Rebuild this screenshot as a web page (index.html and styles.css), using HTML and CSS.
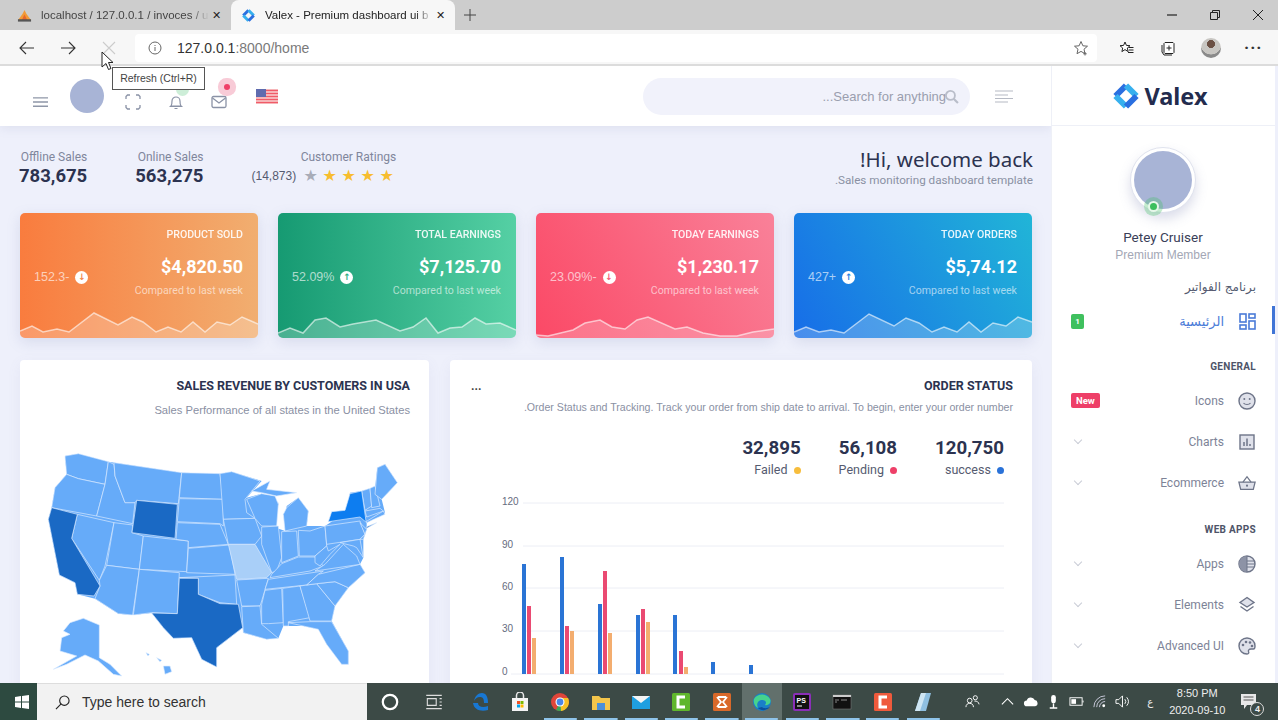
FILE: index.html
```html
<!DOCTYPE html>
<html lang="en">
<head>
  <meta charset="UTF-8" />
  <title>Valex - Premium dashboard ui bootstrap</title>
  <link rel="stylesheet" href="styles.css">
</head>
<body>

  <!-- browser tabs -->
  <div class="tabbar">
    <div class="tab">
      <svg class="tab-icon" viewBox="0 0 16 16"><path d="M1 13 6 6l2-4 2 4 5 7z" fill="#f29b37"/><path d="M5 13l3-6 3 6z" fill="#e8662a"/><rect x="1" y="12" width="14" height="2.5" fill="#555"/></svg>
      <span class="tab-title">localhost / 127.0.0.1 / invoces / u</span>
      <span class="tab-close">✕</span>
    </div>
    <div class="tab tab-active">
      <svg class="tab-icon" viewBox="0 0 30 30"><use href="#valex-mark"/></svg>
      <span class="tab-title">Valex - Premium dashboard ui b</span>
      <span class="tab-close">✕</span>
    </div>
    <svg class="tab-new" viewBox="0 0 12 12"><path d="M6 0v12M0 6h12" stroke="#444" fill="none"/></svg>
    <div class="win-controls">
      <svg viewBox="0 0 12 12"><path d="M1 6h10" stroke="#222" stroke-width="1.2"/></svg>
      <svg viewBox="0 0 12 12"><path d="M1.5 3.5h7v7h-7zM3.5 3.5v-2h7v7h-2" stroke="#222" fill="none"/></svg>
      <svg viewBox="0 0 12 12"><path d="M1 1l10 10M11 1 1 11" stroke="#222" fill="none"/></svg>
    </div>
  </div>

  <!-- browser toolbar -->
  <div class="toolbar">
    <svg class="nav-btn" viewBox="0 0 16 16"><path d="M15 8H1M7 2 1 8l6 6" stroke="#333" fill="none" stroke-width="1.1"/></svg>
    <svg class="nav-btn" viewBox="0 0 16 16"><path d="M1 8h14M9 2l6 6-6 6" stroke="#333" fill="none" stroke-width="1.1"/></svg>
    <svg class="nav-btn" viewBox="0 0 16 16"><path d="M2 2l12 12M14 2 2 14" stroke="#ccc" fill="none" stroke-width="1.1"/></svg>
    <div class="address">
      <svg class="info-icon" viewBox="0 0 14 14"><circle cx="7" cy="7" r="6" fill="none" stroke="#666"/><path d="M7 6v4M7 4v1" stroke="#666"/></svg>
      <span class="url">127.0.0.1<span class="url-muted">:8000/home</span></span>
      <svg class="star-icon" viewBox="0 0 16 16"><path d="M8 1.5l1.9 4.3 4.6.4-3.5 3 1 4.5L8 11.4l-4 2.3 1-4.5-3.5-3 4.6-.4z" fill="none" stroke="#666"/><path d="M12 12v3.5M10.3 13.8h3.4" stroke="#666"/></svg>
    </div>
    <div class="tool-icons">
      <svg viewBox="0 0 16 16"><path d="M6 2l1.4 3.4 3.6.3-2.7 2.3.9 3.6L6 9.6 2.900 11.600l.8-3.600L1 5.700l3.600-.3z" fill="#fff" stroke="#222"/><path d="M9.500 7.500h5M10 10h4.500M9 12.500h5.500" stroke="#222"/></svg>
      <svg viewBox="0 0 16 16"><path d="M5 2.500h8l1 1v9l-1 1H5l-1-1v-9z" fill="#fff" stroke="#222"/><path d="M2 5v7l2 3h8" fill="none" stroke="#222"/><path d="M9 5.500v5M6.500 8h5" stroke="#222"/></svg>
      <div class="profile-pic"></div>
      <span class="dots">···</span>
    </div>
  </div>

  <div class="page">
    <div class="main">

      <div class="header">
        <div class="header-left">
          <svg class="burger" viewBox="0 0 16 12"><path d="M0 1.500h16M0 6h16M0 10.500h16" stroke="#8f97a8" stroke-width="1.400"/></svg>
          <div class="head-avatar"></div>
          <svg class="head-icon" viewBox="0 0 16 16"><path d="M1 5V2.500L2.500 1H5M11 1h2.500L15 2.500V5M15 11v2.500L13.500 15H11M5 15H2.500L1 13.500V11" fill="none" stroke="#8a92a6" stroke-width="1.300"/></svg>
          <div class="head-bell">
            <span class="pulse pulse-green"></span>
            <svg class="head-icon" viewBox="0 0 16 16"><path d="M3 12c1-1 1-2 1-5a4 4 0 0 1 8 0c0 3 0 4 1 5zM1.500 12.500h13M6.500 14.500h3" fill="none" stroke="#8a92a6" stroke-width="1.200"/></svg>
          </div>
          <div class="head-mail">
            <span class="pulse pulse-red"></span>
            <svg class="head-icon" viewBox="0 0 16 14"><rect x="1" y="1.500" width="14" height="11" rx="1.500" fill="none" stroke="#8a92a6" stroke-width="1.300"/><path d="M1.500 3l6.500 5 6.500-5" fill="none" stroke="#8a92a6" stroke-width="1.300"/></svg>
          </div>
          <svg class="flag" viewBox="0 0 22 15">
            <rect width="22" height="15" fill="#f6b5b8"/>
            <path d="M0 1.500h22M0 4.500h22M0 7.500h22M0 10.500h22M0 13.500h22" stroke="#f05b68" stroke-width="1.100"/>
            <rect width="10" height="8" fill="#5f6bae"/>
          </svg>
        </div>
        <div class="header-right">
          <div class="search">
            <span class="search-text">...Search for anything</span>
            <svg class="search-icon" viewBox="0 0 14 14"><circle cx="6" cy="6" r="4.200" fill="none" stroke="#b9bdc9" stroke-width="1.700"/><path d="M9 9l4 4" stroke="#b9bdc9" stroke-width="2"/></svg>
          </div>
          <svg class="align-icon" viewBox="0 0 18 13"><path d="M0 1h18M0 5h13M0 8.500h18M0 12h13" stroke="#b6bac4" stroke-width="1.100"/></svg>
        </div>
      </div>

      <div class="content">
        <div class="stats-row">
          <div class="stats-left">
            <div class="stat">
              <div class="stat-label">Offline Sales</div>
              <div class="stat-value">783,675</div>
            </div>
            <div class="stat">
              <div class="stat-label">Online Sales</div>
              <div class="stat-value">563,275</div>
            </div>
            <div class="stat stat-rating">
              <div class="stat-label">Customer Ratings</div>
              <div class="rating-line">
                <span class="rating-count">(14,873)</span>
                <span class="star star-off">★</span><span class="star">★</span><span class="star">★</span><span class="star">★</span><span class="star">★</span>
              </div>
            </div>
          </div>
          <div class="greeting">
            <h2>!Hi, welcome back</h2>
            <p>.Sales monitoring dashboard template</p>
          </div>
        </div>

        <div class="cards">
          <div class="card card-orange">
            <svg class="spark" viewBox="0 0 238 125" preserveAspectRatio="none"><polygon class="spark-fill" points="0,118 12,113 23,119 37,116 49,119 74,100 98,112 112,104 123,109 136,119 148,114 161,119 173,109 185,119 197,109 210,112 222,104 238,111 238,125 0,125"/><polyline class="spark-line" points="0,118 12,113 23,119 37,116 49,119 74,100 98,112 112,104 123,109 136,119 148,114 161,119 173,109 185,119 197,109 210,112 222,104 238,111"/></svg>
            <div class="card-title">PRODUCT SOLD</div>
            <div class="card-mid">
              <span class="card-change">152.3- <span class="arrow">↓</span></span>
              <div class="card-right">
                <div class="card-amount">$4,820.50</div>
                <div class="card-note">Compared to last week</div>
              </div>
            </div>
          </div>
          <div class="card card-green">
            <svg class="spark" viewBox="0 0 238 125" preserveAspectRatio="none"><polygon class="spark-fill" points="0,120 12,115 25,120 37,107 48,105 62,114 75,111 98,107 122,118 135,114 148,105 160,120 172,115 184,114 197,105 208,111 222,110 238,117 238,125 0,125"/><polyline class="spark-line" points="0,120 12,115 25,120 37,107 48,105 62,114 75,111 98,107 122,118 135,114 148,105 160,120 172,115 184,114 197,105 208,111 222,110 238,117"/></svg>
            <div class="card-title">TOTAL EARNINGS</div>
            <div class="card-mid">
              <span class="card-change">52.09% <span class="arrow">↑</span></span>
              <div class="card-right">
                <div class="card-amount">$7,125.70</div>
                <div class="card-note">Compared to last week</div>
              </div>
            </div>
          </div>
          <div class="card card-red">
            <svg class="spark" viewBox="0 0 238 125" preserveAspectRatio="none"><polygon class="spark-fill" points="0,122 12,123 37,117 49,110 64,107 76,114 89,116 101,107 112,104 139,116 151,114 167,120 184,123 201,123 217,119 238,116 238,125 0,125"/><polyline class="spark-line" points="0,122 12,123 37,117 49,110 64,107 76,114 89,116 101,107 112,104 139,116 151,114 167,120 184,123 201,123 217,119 238,116"/></svg>
            <div class="card-title">TODAY EARNINGS</div>
            <div class="card-mid">
              <span class="card-change">23.09%- <span class="arrow">↓</span></span>
              <div class="card-right">
                <div class="card-amount">$1,230.17</div>
                <div class="card-note">Compared to last week</div>
              </div>
            </div>
          </div>
          <div class="card card-blue">
            <svg class="spark" viewBox="0 0 238 125" preserveAspectRatio="none"><polygon class="spark-fill" points="0,119 12,114 25,119 37,117 50,120 75,101 100,113 112,105 125,110 138,119 150,114 163,119 175,109 187,119 199,110 212,113 224,104 238,109 238,125 0,125"/><polyline class="spark-line" points="0,119 12,114 25,119 37,117 50,120 75,101 100,113 112,105 125,110 138,119 150,114 163,119 175,109 187,119 199,110 212,113 224,104 238,109"/></svg>
            <div class="card-title">TODAY ORDERS</div>
            <div class="card-mid">
              <span class="card-change">427+ <span class="arrow">↑</span></span>
              <div class="card-right">
                <div class="card-amount">$5,74.12</div>
                <div class="card-note">Compared to last week</div>
              </div>
            </div>
          </div>
        </div>

        <div class="panels">
          <div class="panel panel-map">
            <div class="panel-title">SALES REVENUE BY CUSTOMERS IN USA</div>
            <div class="panel-sub">Sales Performance of all states in the United States</div>
            <svg class="us-map" viewBox="0 0 1200 750">
              <polygon class="country" points="135,75 175,68 265,92 485,125 600,128 635,122 725,150 680,200 725,188 775,215 768,290 795,300 800,225 835,200 865,240 860,285 915,285 930,275 980,240 990,185 1025,180 1065,170 1072,110 1095,100 1132,155 1085,205 1095,245 1040,275 1040,295 1030,325 1030,380 1020,400 1035,425 985,470 945,525 935,570 985,660 985,700 965,700 920,640 895,595 850,585 790,585 775,622 740,625 670,605 668,590 590,650 590,708 545,685 515,620 460,622 430,590 395,546 338,552 295,548 225,503 172,490 165,455 118,432 85,265 95,230 105,170 140,130"/>
              <g class="state">
                <polygon points="135,75 175,68 265,92 255,160 175,143 140,130"/>
                <polygon points="140,130 175,143 255,160 230,255 95,230 105,170"/>
                <polygon points="172,250 282,275 255,405 238,448 155,322"/>
                <polygon points="265,92 282,100 285,135 315,215 345,215 338,278 230,255 255,160"/>
                <polygon points="282,95 485,125 475,218 350,208 345,215 315,215 285,135"/>
                <polygon points="282,275 338,282 336,305 370,315 358,415 260,403"/>
                <polygon points="370,315 505,330 500,422 358,415"/>
                <polygon points="260,403 358,415 338,552 295,548 225,503 240,465 238,448"/>
                <polygon points="358,415 478,425 472,548 395,545 340,552"/>
                <polygon points="485,125 600,128 610,205 478,200"/>
                <polygon points="478,203 610,205 610,285 600,278 472,272"/>
                <polygon points="472,275 600,280 625,340 505,350 505,330 468,325"/>
                <polygon points="505,352 628,342 645,430 500,425"/>
                <polygon points="478,440 645,432 650,520 600,515 535,490 535,442"/>
                <polygon points="600,128 635,122 720,150 675,205 680,245 705,262 610,265"/>
                <polygon points="610,265 705,262 725,315 705,340 625,340"/>
                <polygon points="650,447 745,442 725,510 720,525 665,525"/>
                <polygon points="665,527 720,525 725,580 775,622 740,625 670,605"/>
                <polygon points="680,205 725,188 765,195 775,220 770,285 725,285 705,262"/>
                <polygon points="725,288 775,285 785,380 770,420 755,425 725,340"/>
                <polygon points="800,230 835,200 865,240 860,285 795,300 790,250"/>
                <polygon points="695,180 750,150 740,175 830,185 770,195 725,185"/>
                <polygon points="785,302 830,300 835,375 785,395"/>
                <polygon points="835,298 870,300 915,285 920,345 885,375 838,375"/>
                <polygon points="755,430 785,398 835,378 885,378 910,405 870,420 750,440"/>
                <polygon points="745,445 910,420 895,430 860,462 735,475"/>
                <polygon points="735,478 785,472 790,575 745,578 725,578 725,520"/>
                <polygon points="788,472 840,465 870,560 805,572 805,585 790,585"/>
                <polygon points="840,465 890,458 945,525 935,570 870,570"/>
                <polygon points="805,575 870,572 935,572 985,660 985,700 965,700 920,640 895,595 850,585"/>
                <polygon points="890,458 945,452 985,470 945,525"/>
                <polygon points="860,462 895,430 1020,400 1035,425 985,470 945,452 890,458"/>
                <polygon points="885,420 915,400 970,340 1010,375 1020,400"/>
                <polygon points="885,375 920,345 925,360 960,340 930,370 900,405 885,395"/>
                <polygon points="915,285 1020,270 1035,310 1020,325 920,340"/>
                <polygon points="960,335 1020,325 1030,380 1010,350 1000,345"/>
                <polygon points="1020,275 1040,295 1030,325 1020,325 1035,310"/>
                <polygon points="1038,272 1090,240 1095,250 1055,268 1040,275"/>
                <polygon points="1035,240 1080,232 1090,240 1040,258"/>
                <polygon points="1025,180 1050,172 1055,225 1035,238"/>
                <polygon points="1050,172 1065,165 1080,225 1055,230"/>
                <polygon points="1072,110 1095,100 1132,155 1085,205 1065,190"/>
                <polygon points="150,575 190,562 238,582 238,680 270,700 305,735 280,730 235,690 195,672 140,700 100,715 170,675 120,660 125,620 150,610 130,600"/>
                <polygon points="430,705 450,705 455,722 435,730"/>
                <polygon points="378,665 388,670 384,675"/>
                <polygon points="410,680 425,688 420,692"/>
              </g>
              <polygon class="state-dark" points="95,230 172,250 155,322 240,465 222,495 172,490 165,455 118,432 85,265"/>
              <polygon class="state-dark" points="350,208 472,220 465,322 336,305"/>
              <polygon class="state-dark" points="478,442 535,442 535,490 600,518 655,520 668,590 590,650 590,708 545,685 515,620 460,622 430,590 395,546 472,548"/>
              <polygon class="state-light" points="625,340 705,340 755,425 740,440 650,445"/>
              <polygon class="state-bright" points="925,272 935,242 975,238 990,188 1025,180 1038,270 1040,275 1020,258"/>
              <polygon class="state-dark" points="1038,288 1070,275 1040,292"/>
            </svg>
          </div>

          <div class="panel panel-chart">
            <div class="panel-head">
              <span class="panel-more">...</span>
              <span class="panel-title">ORDER STATUS</span>
            </div>
            <div class="panel-sub panel-sub-small">.Order Status and Tracking. Track your order from ship date to arrival. To begin, enter your order number</div>
            <div class="order-totals">
              <div class="order-total">
                <strong>32,895</strong>
                <span>Failed <i class="dot dot-orange"></i></span>
              </div>
              <div class="order-total">
                <strong>56,108</strong>
                <span>Pending <i class="dot dot-red"></i></span>
              </div>
              <div class="order-total">
                <strong>120,750</strong>
                <span>success <i class="dot dot-blue"></i></span>
              </div>
            </div>
            <svg class="bar-chart" viewBox="495 490 520 190">
              <g class="grid">
                <line x1="523" x2="1004" y1="504" y2="504"/>
                <line x1="523" x2="1004" y1="547" y2="547"/>
                <line x1="523" x2="1004" y1="589" y2="589"/>
                <line x1="523" x2="1004" y1="632" y2="632"/>
                <line x1="511" x2="1004" y1="675" y2="675"/>
              </g>
              <g class="axis">
                <text x="502" y="506">120</text>
                <text x="502" y="549">90</text>
                <text x="502" y="591">60</text>
                <text x="502" y="633">30</text>
                <text x="502" y="676">0</text>
              </g>
              <g class="bars-blue">
                <rect x="522" y="565" width="4" height="110"/>
                <rect x="560" y="558" width="4" height="117"/>
                <rect x="598" y="605" width="4" height="70"/>
                <rect x="636" y="616" width="4" height="59"/>
                <rect x="673" y="616" width="4" height="59"/>
                <rect x="711" y="663" width="4" height="12"/>
                <rect x="749" y="666" width="4" height="9"/>
              </g>
              <g class="bars-red">
                <rect x="527" y="607" width="4" height="68"/>
                <rect x="565" y="627" width="4" height="48"/>
                <rect x="603" y="572" width="4" height="103"/>
                <rect x="641" y="610" width="4" height="65"/>
                <rect x="679" y="652" width="4" height="23"/>
              </g>
              <g class="bars-orange">
                <rect x="532" y="639" width="4" height="36"/>
                <rect x="570" y="632" width="4" height="43"/>
                <rect x="608" y="634" width="4" height="41"/>
                <rect x="646" y="623" width="4" height="52"/>
                <rect x="684" y="668" width="4" height="7"/>
              </g>
            </svg>
          </div>
        </div>
      </div>
    </div>

    <aside class="sidebar">
      <div class="logo">
        <svg class="logo-mark" viewBox="0 0 30 30">
          <defs>
            <g id="valex-mark" fill="none" stroke-width="6">
              <path d="M4.500 15 15 4.500" stroke="#2a6fe0"/>
              <path d="M15 4.500 25.500 15" stroke="#37b0ee"/>
              <path d="M4.500 15 15 25.500" stroke="#37b0ee"/>
              <path d="M25.500 15 15 25.500" stroke="#2a6fe0"/>
            </g>
          </defs>
          <use href="#valex-mark"/>
        </svg>
        <span class="logo-text">Valex</span>
      </div>

      <div class="user">
        <div class="user-ring">
          <div class="user-photo"></div>
          <span class="user-online"></span>
        </div>
        <div class="user-name">Petey Cruiser</div>
        <div class="user-role">Premium Member</div>
      </div>

      <div class="side-label side-label-ar">برنامج الفواتير</div>
      <div class="side-item side-active">
        <span class="side-left"><span class="badge badge-green">1</span></span>
        <span class="side-text">الرئيسية</span>
        <svg class="side-icon" viewBox="0 0 18 18"><g fill="none" stroke="#4a7bd8" stroke-width="1.600"><rect x="2" y="2" width="6" height="8"/><rect x="11" y="2" width="6" height="4"/><rect x="2" y="13" width="6" height="4"/><rect x="11" y="9" width="6" height="8"/></g></svg>
      </div>

      <div class="side-label">GENERAL</div>
      <div class="side-item">
        <span class="side-left"><span class="badge badge-red">New</span></span>
        <span class="side-text">Icons</span>
        <svg class="side-icon" viewBox="0 0 18 18"><circle cx="9" cy="9" r="8" fill="#dfe1ea" stroke="#6d7488" stroke-width="1.400"/><circle cx="6.300" cy="7" r="1" fill="#6d7488"/><circle cx="11.700" cy="7" r="1" fill="#6d7488"/><path d="M5.500 11c1.500 2 5.500 2 7 0" fill="none" stroke="#6d7488" stroke-width="1.200"/></svg>
      </div>
      <div class="side-item">
        <span class="side-left"><i class="chev"></i></span>
        <span class="side-text">Charts</span>
        <svg class="side-icon" viewBox="0 0 18 18"><rect x="2" y="2" width="14" height="14" fill="#dfe1ea" stroke="#6d7488" stroke-width="1.400"/><path d="M6 13V9M9 13V5.500M12 13v-2" stroke="#6d7488" stroke-width="1.500"/></svg>
      </div>
      <div class="side-item">
        <span class="side-left"><i class="chev"></i></span>
        <span class="side-text">Ecommerce</span>
        <svg class="side-icon" viewBox="0 0 20 18"><path d="M1 8h18l-2 8H3z" fill="#dfe1ea" stroke="#6d7488" stroke-width="1.400"/><path d="M5.500 8 10 2l4.500 6" fill="none" stroke="#6d7488" stroke-width="1.400"/><circle cx="10" cy="12" r="1.200" fill="#6d7488"/></svg>
      </div>

      <div class="side-label side-label-apps">WEB APPS</div>
      <div class="side-item">
        <span class="side-left"><i class="chev"></i></span>
        <span class="side-text">Apps</span>
        <svg class="side-icon" viewBox="0 0 18 18"><circle cx="9" cy="9" r="8" fill="#dfe1ea" stroke="#6d7488" stroke-width="1.400"/><path d="M9 1a8 8 0 0 0 0 16z" fill="#8d93a6"/><path d="M9 1v16M9 6h7M9 9h8M9 12h7" stroke="#6d7488"/></svg>
      </div>
      <div class="side-item">
        <span class="side-left"><i class="chev"></i></span>
        <span class="side-text">Elements</span>
        <svg class="side-icon" viewBox="0 0 18 18"><path d="M9 1.500 16 6.500 9 11 2 6.500z" fill="#dfe1ea" stroke="#6d7488" stroke-width="1.400"/><path d="M2.500 10.500 9 15l6.500-4.500" fill="none" stroke="#6d7488" stroke-width="1.400"/></svg>
      </div>
      <div class="side-item">
        <span class="side-left"><i class="chev"></i></span>
        <span class="side-text">Advanced UI</span>
        <svg class="side-icon" viewBox="0 0 18 18"><path d="M9 1a8 8 0 0 0 0 16c2 0 2-1.500 1.500-2.500S11 12 13 12h2.500C17 12 17 10 17 9a8 8 0 0 0-8-8z" fill="#dfe1ea" stroke="#6d7488" stroke-width="1.400"/><circle cx="5" cy="8" r="1.300" fill="#6d7488"/><circle cx="8" cy="5" r="1.300" fill="#6d7488"/><circle cx="12" cy="5.500" r="1.300" fill="#6d7488"/><circle cx="14" cy="9" r="1.300" fill="#6d7488"/></svg>
      </div>
    </aside>
  </div>

  <!-- windows taskbar -->
  <div class="taskbar">
    <div class="start">
      <svg viewBox="0 0 14 14"><path d="M0 2l6-1v5.500H0zM7 1l7-1v6.500H7zM0 7.500h6V13l-6-1zM7 7.500h7V14l-7-1z" fill="#fff"/></svg>
    </div>
    <div class="task-search">
      <svg viewBox="0 0 16 16"><circle cx="10" cy="6" r="5" fill="none" stroke="#222" stroke-width="1.200"/><path d="M6.500 9.500 1 15" stroke="#222" stroke-width="1.200"/></svg>
      <span>Type here to search</span>
    </div>
    <div class="task-apps">
      <div class="app"><svg viewBox="0 0 18 18"><circle cx="9" cy="9" r="6.500" fill="none" stroke="#fff" stroke-width="2"/></svg></div>
      <div class="app app-view"><svg viewBox="0 0 18 18"><path d="M2 3h14M2 15h14M3 6h8v6H3zM14 6h2M14 9h2M14 12h2" fill="none" stroke="#ddd"/></svg></div>
      <div class="app app-edge"><svg viewBox="0 0 20 20"><path d="M3 11h11c0-4-1-6-4-6-3 0-5 2-6 4 1-5 4-8 8-8 4 0 6 4 6 10H8c0 4 5 5 10 3v4c-7 2-14 0-15-7z" fill="#1877d2"/></svg></div>
      <div class="app"><svg viewBox="0 0 20 20"><rect x="2" y="6" width="16" height="13" fill="#f4f4f4"/><path d="M6.500 6V3.500a3.500 3.500 0 0 1 7 0V6" fill="none" stroke="#e8e8e8" stroke-width="1.500"/><rect x="7" y="9" width="3" height="3" fill="#f25022"/><rect x="10.500" y="9" width="3" height="3" fill="#7fba00"/><rect x="7" y="12.500" width="3" height="3" fill="#00a4ef"/><rect x="10.500" y="12.500" width="3" height="3" fill="#ffb900"/></svg></div>
      <div class="app app-run"><svg viewBox="0 0 20 20"><circle cx="10" cy="10" r="9" fill="#e0453a"/><path d="M10 10 17.800 14.500A9 9 0 0 1 6 18z" fill="#3aa757"/><path d="M10 6h8a9 9 0 0 1-7 13z" fill="#f6c026"/><circle cx="10" cy="10" r="4.500" fill="#fff"/><circle cx="10" cy="10" r="3.400" fill="#4a86e8"/></svg></div>
      <div class="app app-run"><svg viewBox="0 0 20 20"><path d="M1 4h7l2 2h9v12H1z" fill="#f3c54b"/><rect x="6" y="11" width="8" height="7" fill="#4a8fd8"/></svg></div>
      <div class="app app-run"><svg viewBox="0 0 20 20"><rect x="1" y="4" width="18" height="13" fill="#1f9fe0"/><path d="M1 4l9 7 9-7" fill="#f4f4f4"/></svg></div>
      <div class="app app-run"><svg viewBox="0 0 20 20"><rect x="1" y="1" width="18" height="18" rx="1.500" fill="#5fb62c"/><path d="M14 5H7v10h7" fill="none" stroke="#fff" stroke-width="3"/></svg></div>
      <div class="app app-run"><svg viewBox="0 0 20 20"><rect x="1" y="1" width="18" height="18" rx="1.500" fill="#d9692a"/><path d="M5 5l4 5-4 5M15 5l-4 5 4 5M6 5h8M6 15h8" fill="none" stroke="#fff" stroke-width="1.800"/></svg></div>
      <div class="app app-run app-active"><svg viewBox="0 0 20 20"><circle cx="10" cy="10" r="9" fill="#1a7fc8"/><path d="M2 7c3-6 13-6 16 0 2 4-2 7-5 6 2-2 1-5-3-5-4 0-6 4-4 8-3-1-5-5-4-9z" fill="#46d38e"/><path d="M6 16c3 3 8 3 12-1-2 1-6 2-8 0z" fill="#0c4f9e"/></svg></div>
      <div class="app app-run"><svg viewBox="0 0 20 20"><rect x="1" y="1" width="18" height="18" rx="2" fill="#8b2fb8"/><rect x="3" y="3" width="14" height="14" fill="#111"/><text class="ps-text" x="4.500" y="11">PS</text><path d="M5 14h5" stroke="#fff"/></svg></div>
      <div class="app app-run"><svg viewBox="0 0 20 20"><rect x="1" y="3" width="18" height="14" fill="#111" stroke="#777" stroke-width=".6"/><rect x="1" y="3" width="18" height="2" fill="#ccc"/><path d="M3 8h4M3 10h2M9 8h6" stroke="#bbb" stroke-width=".7"/></svg></div>
      <div class="app app-run"><svg viewBox="0 0 20 20"><rect x="1" y="1" width="18" height="18" rx="1.500" fill="#ef5a3c"/><path d="M14 5H7v10h7" fill="none" stroke="#fff" stroke-width="3"/></svg></div>
      <div class="app app-run"><svg viewBox="0 0 20 20"><path d="M8 1h10L13 19H2z" fill="#8fbfe0"/><path d="M8 1h5L7 19H2z" fill="#cfe6f3"/></svg></div>
    </div>
    <div class="tray">
      <svg class="tray-icon tray-people" viewBox="0 0 16 16"><circle cx="5" cy="7" r="2.500" fill="none" stroke="#fff"/><path d="M1 14c0-3 2-4 4-4s4 1 4 4" fill="none" stroke="#fff"/><circle cx="11" cy="4" r="2.200" fill="none" stroke="#fff"/><path d="M10 7.500c3 0 4.500 1 5 3.500" fill="none" stroke="#fff"/></svg>
      <svg class="tray-icon" viewBox="0 0 16 16"><path d="M2 11l6-6 6 6" fill="none" stroke="#fff" stroke-width="1.200"/></svg>
      <svg class="tray-icon" viewBox="0 0 16 16"><path d="M4 13a3 3 0 0 1 0-6 4.500 4.500 0 0 1 8.500-.5A3.300 3.300 0 0 1 13 13z" fill="#fff"/></svg>
      <svg class="tray-icon" viewBox="0 0 16 16"><rect x="5.500" y="1" width="5" height="9" rx="2.500" fill="#fff"/><path d="M8 10v5M4 15h8" stroke="#fff" stroke-width="1.500"/></svg>
      <svg class="tray-icon" viewBox="0 0 16 16"><rect x="1" y="4" width="13" height="8" fill="none" stroke="#fff"/><rect x="2.500" y="5.500" width="5" height="5" fill="#fff"/><path d="M15 7v2" stroke="#fff"/></svg>
      <svg class="tray-icon" viewBox="0 0 16 16"><path d="M2 14a12 12 0 0 1 12-12M5 14a9 9 0 0 1 9-9M8 14a6 6 0 0 1 6-6" fill="none" stroke="#ccd" stroke-width="1"/><circle cx="12.500" cy="12.500" r="1.500" fill="#fff"/></svg>
      <svg class="tray-icon" viewBox="0 0 16 16"><path d="M1 6h3l4-4v12l-4-4H1z" fill="none" stroke="#fff"/><path d="M10.500 5.500a4 4 0 0 1 0 5M12.500 3.500a7 7 0 0 1 0 9" fill="none" stroke="#fff"/></svg>
      <span class="tray-lang">ع</span>
      <div class="clock">
        <div>8:50 PM</div>
        <div>2020-09-10</div>
      </div>
      <div class="notify">
        <svg viewBox="0 0 18 18"><path d="M1 1h15v11H7l-3 4v-4H1z" fill="#e8e8e8"/><path d="M3.500 4h10M3.500 7h10" stroke="#555"/></svg>
        <span class="notify-count">4</span>
      </div>
    </div>
  </div>

  <!-- pointer + tooltip over the page -->
  <svg class="cursor" viewBox="0 0 14 20"><path d="M1 1v15l4-3.500 2.500 6 2.500-1-2.500-6H12z" fill="#fff" stroke="#222"/></svg>
  <div class="tooltip">Refresh (Ctrl+R)</div>

</body>
</html>
```

FILE: styles.css
```css
* {
  box-sizing: border-box;
}

body {
  margin: 0;
  width: 1278px;
  height: 720px;
  overflow: hidden;
  display: flex;
  flex-direction: column;
  position: relative;
  font-family: Roboto, "Noto Sans", sans-serif;
  color: #2c3350;
  background-color: #fff;
}

/* browser tabs */
.tabbar {
  height: 30px;
  background-color: #cdcdcd;
  display: flex;
  align-items: stretch;
  flex-shrink: 0;
}

.tab {
  width: 231px;
  display: flex;
  align-items: center;
  padding: 0 8px 0 17px;
  font-family: "Liberation Sans", sans-serif;
  font-size: 11.5px;
  color: #444;
}

.tab-active {
  width: 224px;
  padding-left: 10px;
  background-color: #f7f7f7;
  border-radius: 8px 8px 0 0;
  color: #222;
}

.tab-icon {
  width: 15px;
  height: 15px;
  margin-right: 9px;
  flex-shrink: 0;
}

.tab-title {
  flex: 1;
  white-space: nowrap;
  -webkit-mask-image: linear-gradient(to left, transparent, #000 18px);
}

.tab-close {
  width: 14px;
  font-size: 11px;
  color: #222;
  text-align: center;
}

.tab-new {
  width: 12px;
  height: 12px;
  align-self: center;
  margin-left: 9px;
}

.win-controls {
  margin-left: auto;
  display: flex;
  align-items: center;
  gap: 31px;
  padding-right: 14px;
}

.win-controls svg {
  width: 12px;
  height: 12px;
}

/* browser toolbar */
.toolbar {
  height: 36px;
  background-color: #f7f7f7;
  border-bottom: 2px solid #dcdcdc;
  display: flex;
  align-items: center;
  padding: 2px 0 0 19px;
  flex-shrink: 0;
}

.nav-btn {
  width: 16px;
  height: 16px;
  margin-right: 25px;
}

.address {
  width: 962px;
  height: 28px;
  margin-left: -7px;
  background-color: #fff;
  border-radius: 4px;
  display: flex;
  align-items: center;
  padding: 0 8px 0 13px;
}

.info-icon {
  width: 14px;
  height: 14px;
  margin-right: 15px;
}

.url {
  font-family: "Liberation Sans", sans-serif;
  font-size: 14px;
  color: #333;
  flex: 1;
}

.url-muted {
  color: #7a7a7a;
}

.star-icon {
  width: 16px;
  height: 16px;
}

.tool-icons {
  flex: 1;
  display: flex;
  align-items: center;
  padding-left: 22px;
}

.tool-icons svg {
  width: 16px;
  height: 16px;
  margin-right: 25px;
}

.profile-pic {
  width: 20px;
  height: 20px;
  border-radius: 50%;
  background: radial-gradient(circle at 50% 30%, #6b5044 0 22%, #c8c6c2 24% 60%, #8a8a8a 62%);
}

.dots {
  margin-left: 23px;
  font-size: 17px;
  font-weight: 700;
  letter-spacing: 1px;
  color: #333;
}

/* page */
.page {
  flex: 1;
  min-height: 0;
  display: flex;
  background-color: #eef0fb;
  overflow: hidden;
}

.main {
  width: 1051px;
  min-width: 0;
  display: flex;
  flex-direction: column;
}

.header {
  height: 60px;
  background-color: #fff;
  box-shadow: 0 2px 10px rgba(120, 130, 170, 0.15);
  display: flex;
  align-items: center;
  justify-content: space-between;
  padding: 0 38px 0 33px;
  flex-shrink: 0;
}

.header-left {
  display: flex;
  align-items: center;
}

.burger {
  width: 15px;
  height: 12px;
  margin-top: 12px;
}

.head-avatar {
  width: 34px;
  height: 34px;
  margin-left: 22px;
  border-radius: 50%;
  background-color: #a8b4d6;
}

.head-icon {
  width: 16px;
  height: 16px;
  display: block;
}

.head-avatar + .head-icon {
  margin: 12px 0 0 21px;
}

.head-bell,
.head-mail {
  position: relative;
  margin: 12px 0 0 27px;
}

.pulse {
  position: absolute;
  border-radius: 50%;
}

.pulse-green {
  top: -11px;
  left: 8px;
  width: 13px;
  height: 13px;
  background-color: #cdeed8;
}

.pulse-red {
  top: -10px;
  left: 13px;
  width: 6px;
  height: 6px;
  background-color: #ef3f68;
  box-shadow: 0 0 0 6px #f8cbd7;
}

.flag {
  width: 22px;
  height: 15px;
  margin: 0 0 0 29px;
}

.header-right {
  display: flex;
  align-items: center;
}

.search {
  width: 327px;
  height: 37px;
  margin-top: 1px;
  border-radius: 19px;
  background-color: #f1f2fb;
  display: flex;
  align-items: center;
  justify-content: flex-end;
  padding-right: 11px;
  font-family: "Liberation Sans", sans-serif;
  font-size: 13px;
  color: #9a9eae;
}

.search-icon {
  width: 15px;
  height: 15px;
  margin-left: -2px;
}

.align-icon {
  width: 18px;
  height: 13px;
  margin-left: 25px;
}

.content {
  flex: 1;
  padding: 0 19px 0 20px;
  min-height: 0;
}

/* stats row */
.stats-row {
  height: 87px;
  display: flex;
  justify-content: space-between;
  align-items: flex-start;
  padding-top: 22px;
  margin: 0 -1px;
}

.stats-left {
  display: flex;
  gap: 48px;
}

.stat {
  text-align: right;
}

.stat-label {
  font-size: 12px;
  line-height: 18px;
  color: #80869b;
}

.stat-value {
  font-size: 18.500px;
  font-weight: 700;
  line-height: 20px;
  color: #2c3350;
}

.rating-line {
  display: flex;
  align-items: center;
  height: 19px;
  font-family: "Liberation Sans", sans-serif;
  font-size: 12px;
  color: #555b70;
}

.rating-count {
  margin-right: 5px;
}

.star {
  width: 19px;
  font-family: "DejaVu Sans", sans-serif;
  font-size: 16px;
  color: #f7bd2f;
  text-align: center;
}

.star-off {
  color: #a8acb8;
}

.greeting {
  text-align: right;
  margin-top: -1px;
}

.greeting h2 {
  margin: 0;
  font-family: "Noto Sans", sans-serif;
  font-size: 20.500px;
  font-weight: 400;
  line-height: 24px;
  color: #2c3350;
}

.greeting p {
  margin: 0;
  font-size: 11.700px;
  line-height: 18px;
  color: #8a90a3;
}

/* stat cards */
.cards {
  display: flex;
  gap: 20px;
}

.card {
  position: relative;
  width: 238px;
  height: 125px;
  border-radius: 5px;
  overflow: hidden;
  padding: 15px 15px 0 14px;
  color: #fff;
  box-shadow: 0 4px 14px rgba(110, 120, 170, 0.18);
}

.card-orange {
  background: linear-gradient(to right, #f97c3e, #f1ae70);
}

.card-green {
  background: linear-gradient(to right, #169a72, #55d0a4);
}

.card-red {
  background: linear-gradient(60deg, #fb4966, #f98199);
}

.card-blue {
  background: linear-gradient(60deg, #176de8, #21b5d7);
}

.spark {
  position: absolute;
  left: 0;
  top: 0;
  width: 100%;
  height: 100%;
}

.spark-fill {
  fill: rgba(255, 255, 255, 0.22);
}

.spark-line {
  fill: none;
  stroke: rgba(255, 255, 255, 0.6);
  stroke-width: 1.500;
}

.card-title {
  font-size: 10.600px;
  font-weight: 500;
  line-height: 14px;
  text-align: right;
  opacity: 0.9;
}

.card-mid {
  display: flex;
  justify-content: space-between;
  align-items: center;
  margin-top: 14px;
}

.card-change {
  font-family: "Liberation Sans", sans-serif;
  font-size: 12.500px;
  color: rgba(255, 255, 255, 0.65);
  display: flex;
  align-items: center;
  gap: 6px;
}

.arrow {
  width: 13px;
  height: 13px;
  border-radius: 50%;
  background-color: #fff;
  font-family: "DejaVu Sans", sans-serif;
  font-size: 9px;
  font-weight: 700;
  line-height: 13px;
  text-align: center;
  color: #888;
}

.card-orange .arrow {
  color: #f3894f;
}

.card-green .arrow {
  color: #2aad82;
}

.card-red .arrow {
  color: #fa5b78;
}

.card-blue .arrow {
  color: #1f82e2;
}

.card-right {
  text-align: right;
}

.card-amount {
  font-size: 18px;
  font-weight: 700;
  line-height: 22px;
}

.card-note {
  margin-top: 6px;
  font-size: 10.600px;
  line-height: 14px;
  color: rgba(255, 255, 255, 0.6);
}

/* lower panels */
.panels {
  display: flex;
  gap: 21px;
  margin-top: 22px;
}

.panel {
  background-color: #fff;
  height: 340px;
  border-radius: 4px;
  box-shadow: 0 4px 14px rgba(110, 120, 170, 0.08);
}

.panel-map {
  width: 409px;
  padding: 17px 19px 0 0;
  text-align: right;
}

.panel-chart {
  width: 582px;
  padding: 17px 19px 0 21px;
}

.panel-title {
  font-size: 12.500px;
  font-weight: 700;
  line-height: 17px;
  color: #2c3350;
}

.panel-head {
  display: flex;
  justify-content: space-between;
  align-items: center;
}

.panel-more {
  font-size: 12px;
  font-weight: 700;
  color: #444;
}

.panel-sub {
  margin-top: 9px;
  font-family: "Liberation Sans", sans-serif;
  font-size: 11.200px;
  line-height: 14px;
  color: #8a90a3;
  text-align: right;
  white-space: nowrap;
}

.panel-sub-small {
  margin-top: 6px;
  font-size: 10.600px;
}

.us-map {
  display: block;
  width: 400px;
  height: 250px;
  margin-top: 14px;
}

.country {
  fill: #66abf9;
}

.state polygon {
  fill: #66abf9;
  stroke: #dcecff;
  stroke-width: 2;
}

.state-dark {
  fill: #1a69c4;
  stroke: #dcecff;
  stroke-width: 2;
}

.state-light {
  fill: #a9cff8;
  stroke: #dcecff;
  stroke-width: 2;
}

.state-bright {
  fill: #0d7df0;
  stroke: #dcecff;
  stroke-width: 2;
}

.order-totals {
  display: flex;
  justify-content: flex-end;
  gap: 38px;
  margin-top: 22px;
  padding-right: 9px;
}

.order-total {
  text-align: right;
}

.order-total strong {
  display: block;
  font-size: 18.700px;
  line-height: 24px;
  font-weight: 700;
  color: #2c3350;
}

.order-total span {
  display: block;
  font-size: 12.500px;
  line-height: 20px;
  color: #555b70;
}

.dot {
  display: inline-block;
  width: 7px;
  height: 7px;
  border-radius: 50%;
  margin-left: 3px;
}

.dot-orange {
  background-color: #f7bd3c;
}

.dot-red {
  background-color: #ee3f68;
}

.dot-blue {
  background-color: #2a72d8;
}

.bar-chart {
  display: block;
  width: 520px;
  height: 190px;
  margin: 9px 0 0 24px;
}

.grid line {
  stroke: #eceef5;
}

.axis text {
  font-family: "Liberation Sans", sans-serif;
  font-size: 10px;
  fill: #666c7e;
}

.bars-blue rect {
  fill: #2a74d5;
}

.bars-red rect {
  fill: #ea4a72;
}

.bars-orange rect {
  fill: #f3ad6f;
}

/* right sidebar */
.sidebar {
  width: 224px;
  background-color: #fff;
  border-left: 1px solid #eef0f7;
  margin-right: 3px;
  flex-shrink: 0;
}

.logo {
  height: 60px;
  border-bottom: 1px solid #eef0f7;
  display: flex;
  align-items: center;
  justify-content: center;
  padding-right: 8px;
}

.logo-mark {
  width: 30px;
  height: 30px;
  margin-right: 3px;
}

.logo-text {
  font-family: "Noto Sans", sans-serif;
  font-size: 23.500px;
  font-weight: 700;
  color: #232c4e;
}

.user {
  text-align: center;
  padding: 21px 1px 0 0;
  height: 153px;
}

.user-ring {
  position: relative;
  width: 66px;
  height: 66px;
  margin: 0 auto;
  padding: 3px;
  border: 1px solid #e0e3ee;
  border-radius: 50%;
  background-color: #fff;
  box-shadow: 0 6px 12px rgba(110, 120, 170, 0.25);
}

.user-photo {
  width: 100%;
  height: 100%;
  border-radius: 50%;
  background-color: #a8b4d6;
}

.user-online {
  position: absolute;
  left: 17px;
  bottom: 0;
  width: 11px;
  height: 11px;
  border-radius: 50%;
  background-color: #3cbf5e;
  border: 2px solid #e6f7ea;
  box-shadow: 0 0 0 4px rgba(60, 191, 94, 0.3);
}

.user-name {
  margin-top: 14px;
  font-size: 13.500px;
  line-height: 20px;
  color: #3a4058;
}

.user-role {
  font-family: "Liberation Sans", sans-serif;
  font-size: 12px;
  line-height: 16px;
  color: #a3a7b5;
}

.side-label {
  padding-right: 19px;
  height: 17px;
  margin-bottom: 5px;
  font-size: 10px;
  font-weight: 700;
  line-height: 17px;
  letter-spacing: 0.3px;
  text-align: right;
  color: #4e5468;
}

.side-label-ar {
  font-family: "DejaVu Sans", sans-serif;
  font-weight: 400;
  letter-spacing: 0;
  font-size: 12px;
  color: #555b70;
}

.side-item + .side-label {
  margin-top: 17px;
}

.side-item + .side-label-apps {
  margin-top: 18px;
}

.side-item {
  position: relative;
  height: 41px;
  display: flex;
  align-items: center;
  padding: 0 19px 0 19px;
  font-size: 12px;
  color: #7d8397;
}

.side-active {
  height: 40px;
  margin-top: 2px;
  color: #4a7bd8;
}

.side-active::after {
  content: "";
  position: absolute;
  right: 0;
  top: 5px;
  width: 3px;
  height: 28px;
  background-color: #3f74d6;
}

.side-active .side-text {
  font-family: "DejaVu Sans", sans-serif;
  font-size: 13px;
}

.side-left {
  margin-right: auto;
  display: flex;
  align-items: center;
}

.side-icon {
  width: 18px;
  height: 18px;
  margin-left: 14px;
}

.badge {
  border-radius: 2px;
  font-size: 9.500px;
  font-weight: 700;
  line-height: 15px;
  color: #fff;
}

.badge-green {
  width: 13px;
  height: 15px;
  text-align: center;
  background-color: #3fc05e;
  font-size: 8px;
}

.badge-red {
  padding: 0 5px;
  background-color: #ee3f68;
}

.chev {
  width: 6px;
  height: 6px;
  margin: -3px 0 0 4px;
  border-right: 1px solid #c9ccd6;
  border-bottom: 1px solid #c9ccd6;
  transform: rotate(45deg);
}

/* taskbar */
.taskbar {
  height: 37px;
  background-color: #3c4a46;
  display: flex;
  align-items: stretch;
  flex-shrink: 0;
  position: relative;
  z-index: 1;
}

.start {
  width: 37px;
  background-color: #2d4a40;
  display: flex;
  align-items: center;
  justify-content: center;
  padding-left: 7px;
}

.start svg {
  width: 14px;
  height: 14px;
}

.task-search {
  width: 330px;
  background-color: #f2f2f2;
  border-top: 1px solid #ddd;
  display: flex;
  align-items: center;
  padding-left: 18px;
  font-family: "Liberation Sans", sans-serif;
  font-size: 14px;
  color: #333;
}

.task-search svg {
  width: 15px;
  height: 15px;
  margin-right: 12px;
}

.task-apps {
  display: flex;
  padding-left: 3px;
}

.app {
  width: 40.300px;
  display: flex;
  align-items: center;
  justify-content: center;
}

.app svg {
  width: 20px;
  height: 20px;
}

.app-view {
  margin-left: 4px;
}

.app-edge {
  margin-left: 5px;
}

.app-run {
  background: linear-gradient(#8fc4ea, #8fc4ea) bottom / 82% 2px no-repeat;
}

.app-active {
  background-color: #62706c;
}

.ps-text {
  font-family: "Liberation Sans", sans-serif;
  font-size: 7px;
  font-weight: 700;
  fill: #fff;
}

.tray {
  flex: 1;
  display: flex;
  align-items: center;
  padding-left: 22px;
  color: #eee;
}

.tray-icon {
  width: 15px;
  height: 15px;
  margin-right: 8px;
}

.tray-people {
  margin-right: 20px;
}

.tray-lang {
  font-family: "DejaVu Sans", sans-serif;
  font-size: 10px;
  margin: 0 0 0 9px;
}

.clock {
  margin-left: 16px;
  font-family: "Liberation Sans", sans-serif;
  font-size: 11px;
  line-height: 17px;
  text-align: center;
  white-space: nowrap;
}

.notify {
  position: relative;
  margin-left: 15px;
}

.notify svg {
  display: block;
  width: 18px;
  height: 18px;
}

.notify-count {
  position: absolute;
  right: -6px;
  bottom: -5px;
  width: 14px;
  height: 14px;
  border-radius: 50%;
  border: 1px solid #ddd;
  background-color: #3c4a46;
  font-family: "Liberation Sans", sans-serif;
  font-size: 9px;
  font-weight: 700;
  line-height: 12px;
  text-align: center;
}

/* pointer and tooltip */
.cursor {
  position: absolute;
  left: 101px;
  top: 51px;
  width: 14px;
  height: 20px;
  z-index: 3;
}

.tooltip {
  position: absolute;
  left: 112px;
  top: 67px;
  width: 93px;
  height: 23px;
  background-color: #fff;
  border: 1px solid #555;
  font-family: "Liberation Sans", sans-serif;
  font-size: 10.500px;
  line-height: 21px;
  text-align: center;
  color: #444;
  z-index: 2;
}
```
